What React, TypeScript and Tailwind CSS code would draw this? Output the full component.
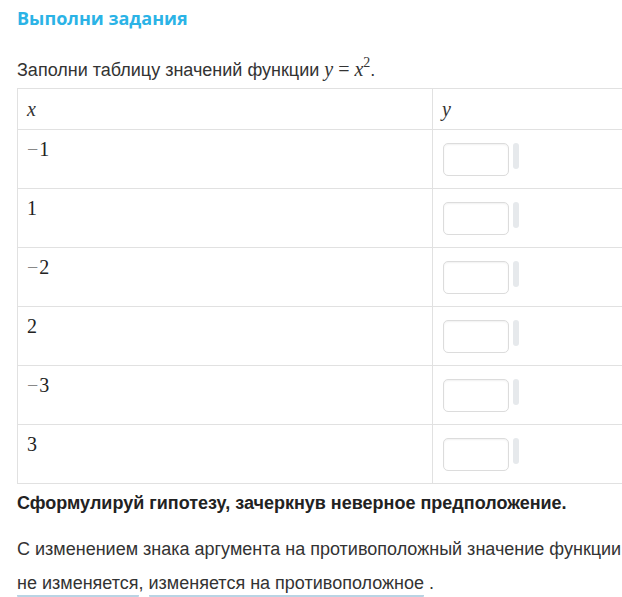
const rows = [
  { neg: true, n: "1" },
  { neg: false, n: "1" },
  { neg: true, n: "2" },
  { neg: false, n: "2" },
  { neg: true, n: "3" },
  { neg: false, n: "3" },
];

function MathNum({ neg, n }: { neg: boolean; n: string }) {
  return (
    <span className="font-['Liberation_Serif','DejaVu_Serif',serif] text-[20px] text-[#222]">
      {neg && <span className="mr-[1px] text-[#888]">−</span>}
      {n}
    </span>
  );
}

export default function App() {
  return (
    <div className="h-[597px] w-[622px] overflow-hidden bg-white font-['Liberation_Sans',Arial,sans-serif] text-[#333]">
      <div className="pl-[17px]">
        <h2 className="pt-[6px] font-['Open_Sans',sans-serif] text-[18px] font-bold leading-[24px] text-[#2bb3e6]">
          Выполни задания
        </h2>

        <p className="mt-[27px] text-[18px] leading-[24px]">
          Заполни таблицу значений функции{" "}
          <span className="font-['Liberation_Serif','DejaVu_Serif',serif] text-[20px]">
            <i>y</i> = <i>x</i>
            <span className="relative top-[-9px] text-[14px]">2</span>
          </span>
          .
        </p>

        <table className="mt-[4px] w-[660px] border-collapse">
          <thead>
            <tr className="h-[41px]">
              <td className="w-[415px] border border-[#e1e1e1] px-[9px] align-middle">
                <i className="font-['Liberation_Serif','DejaVu_Serif',serif] text-[20px] text-[#333]">x</i>
              </td>
              <td className="border border-[#e1e1e1] px-[9px] align-middle">
                <i className="font-['Liberation_Serif','DejaVu_Serif',serif] text-[20px] text-[#333]">y</i>
              </td>
            </tr>
          </thead>
          <tbody>
            {rows.map((r, i) => (
              <tr key={i} className="h-[59px]">
                <td className="border border-[#e1e1e1] px-[9px] pt-[7px] align-top leading-[24px]">
                  <MathNum neg={r.neg} n={r.n} />
                </td>
                <td className="border border-[#e1e1e1] pl-[10px] pt-[13px] align-top">
                  <div className="flex items-start gap-[4px]">
                    <div className="h-[33px] w-[66px] rounded-[5px] border border-[#dcdcdc] bg-white shadow-[inset_0_1px_2px_rgba(0,0,0,0.06)]" />
                    <div className="h-[26px] w-[6px] rounded-[3px] bg-[#e6e9ec]" />
                  </div>
                </td>
              </tr>
            ))}
          </tbody>
        </table>

        <p className="mt-[7px] text-[18px] font-bold leading-[24px] text-[#222]">
          Сформулируй гипотезу, зачеркнув неверное предположение.
        </p>

        <p className="mt-[22px] whitespace-nowrap text-[18px] leading-[24px]">
          С изменением знака аргумента на противоположный значение функции
        </p>
        <div className="mt-[11px] flex items-start text-[18px] leading-[22px]">
          <span className="inline-block rounded-[1px] border-b-2 border-solid border-[#b9d4e4] pb-[1px]">не изменяется</span>
          <span>,&nbsp;</span>
          <span className="inline-block rounded-[1px] border-b-2 border-solid border-[#b9d4e4] pb-[1px]">изменяется на противоположное</span>
          <span>&nbsp;.</span>
        </div>
      </div>
    </div>
  );
}
